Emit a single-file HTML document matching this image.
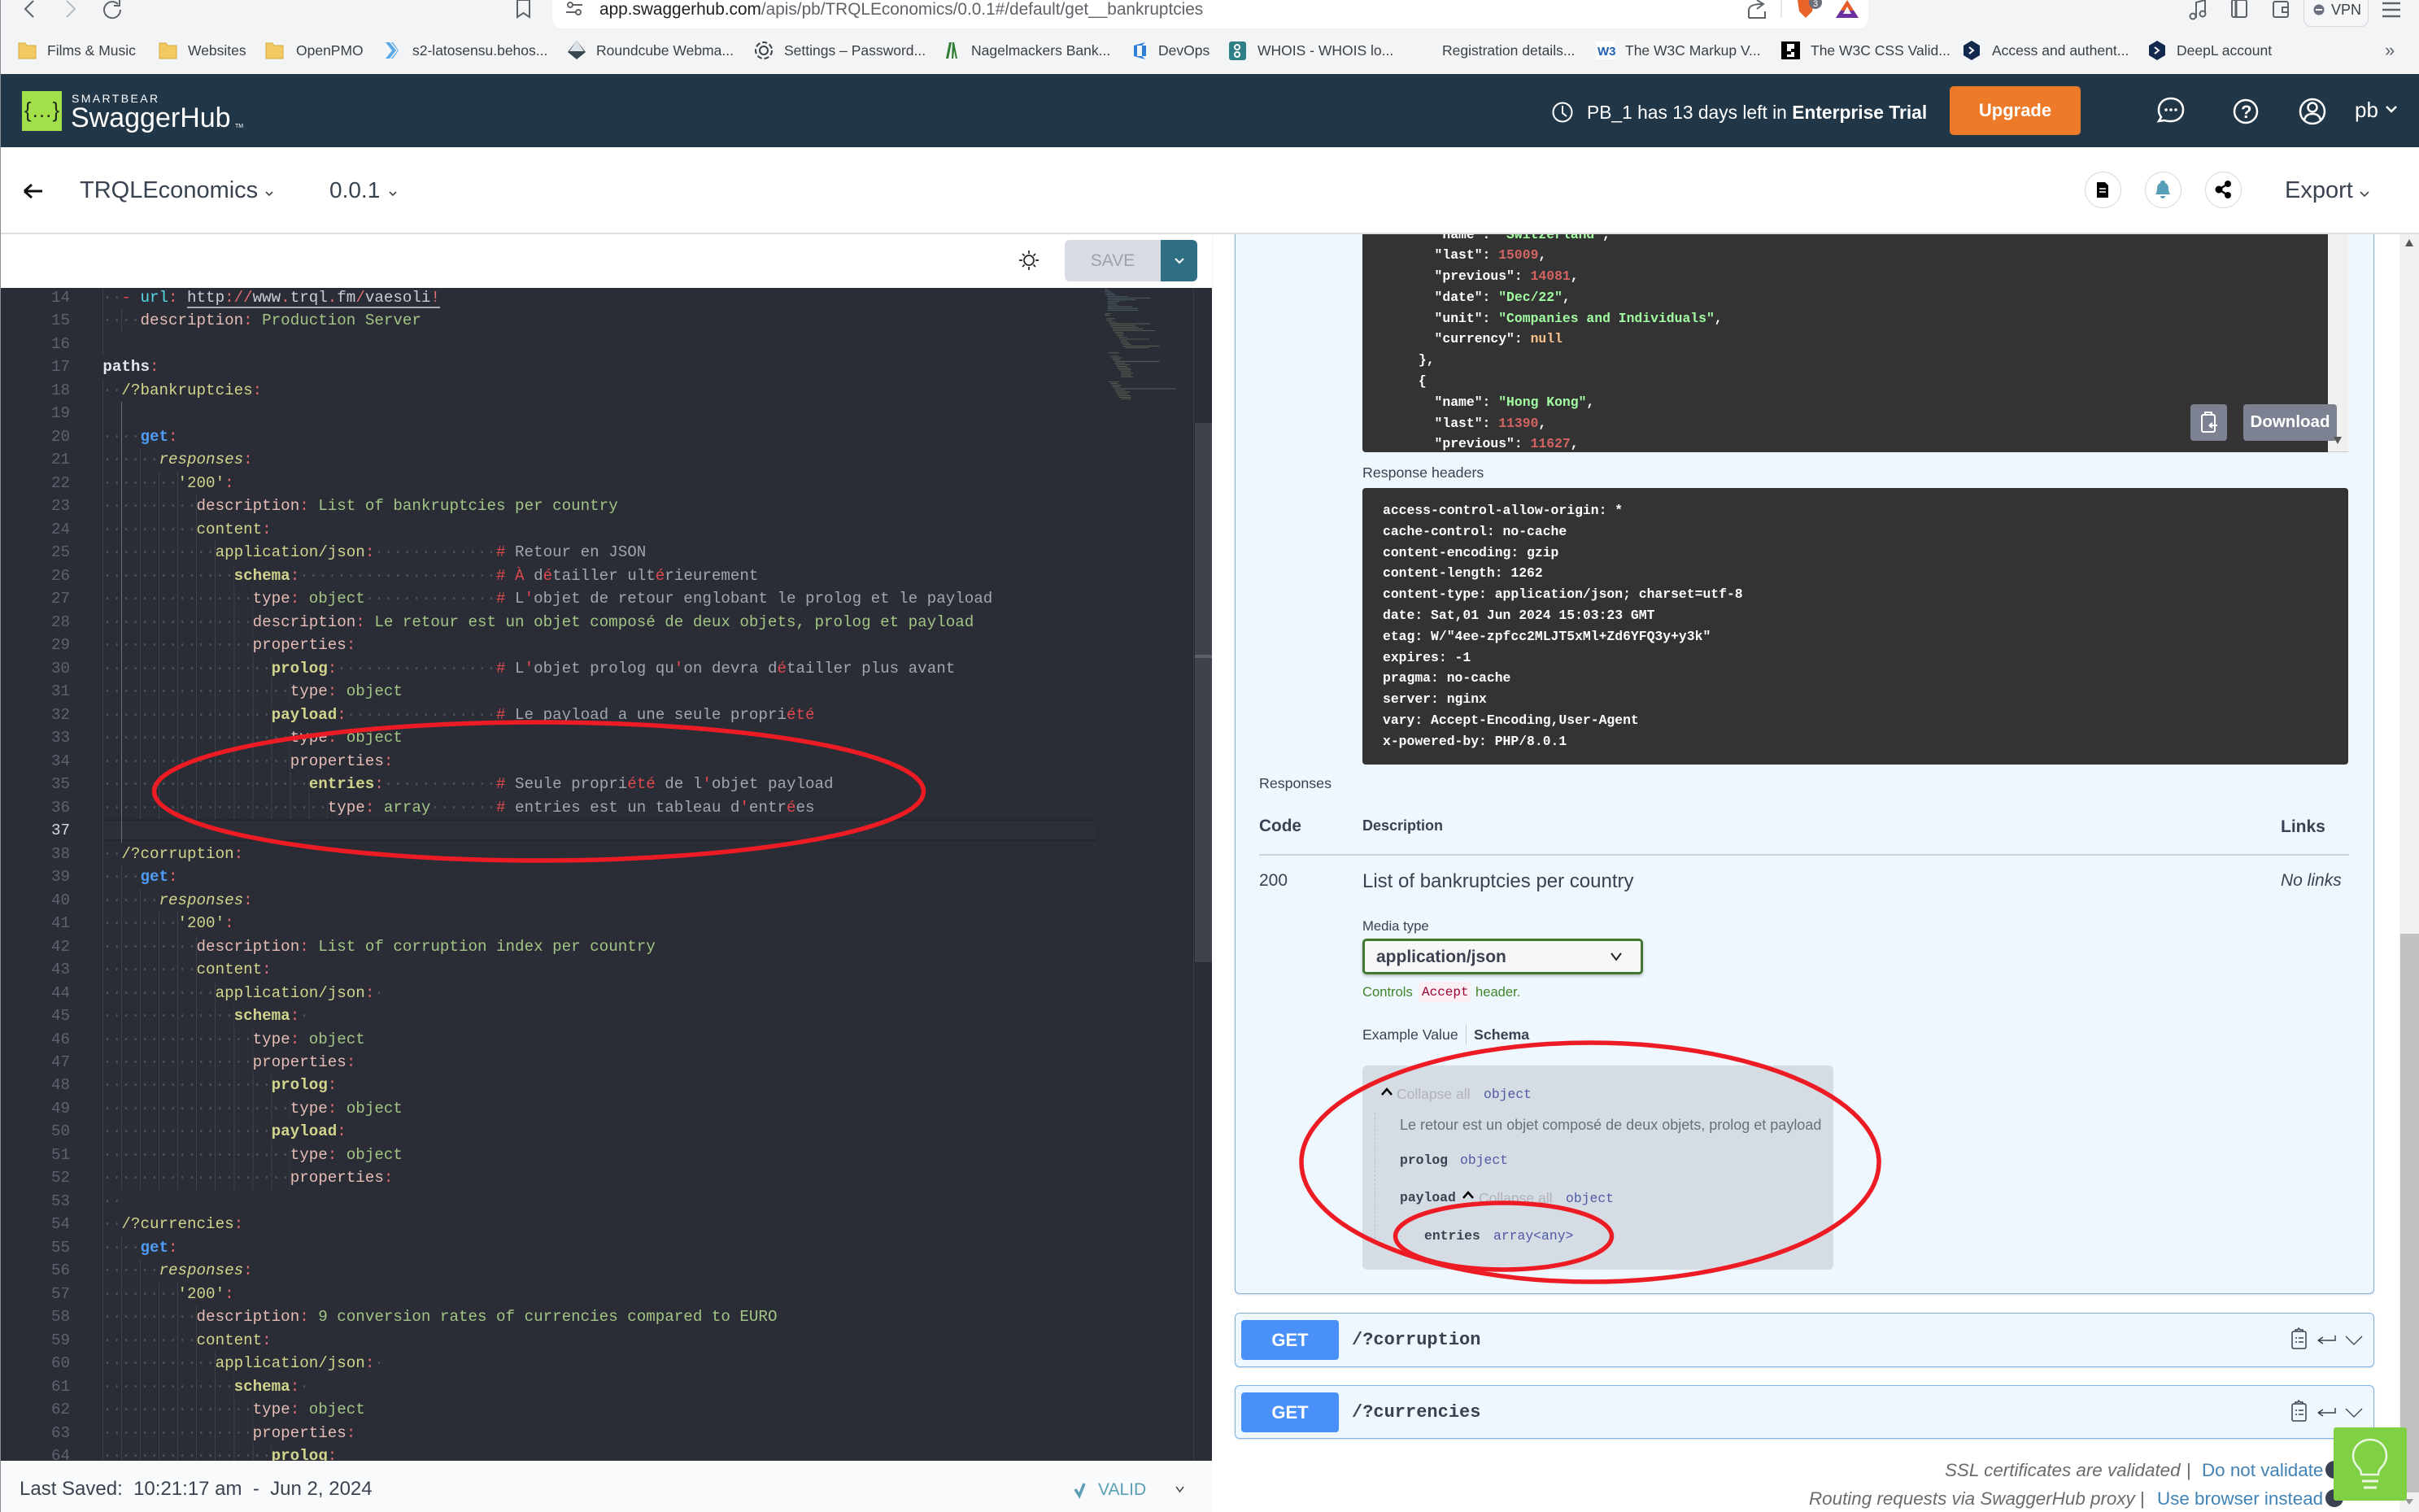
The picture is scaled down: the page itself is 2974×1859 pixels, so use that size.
<!DOCTYPE html>
<html lang="en"><head><meta charset="utf-8"><title>SwaggerHub</title>
<style>
html,body{margin:0;padding:0}
body{width:2974px;height:1859px;position:relative;overflow:hidden;background:#fff;font-family:"Liberation Sans",sans-serif;color:#3b4151}
.a{position:absolute}
.t{position:absolute;white-space:pre;line-height:1}
.m{font-family:"Liberation Mono",monospace}
.bm{position:absolute;top:52px;font-size:17.5px;line-height:20px;color:#3c4043;white-space:pre}
#ed{position:absolute;left:0;top:354px;width:1490px;height:1442px;background:#2a2d35;overflow:hidden}
#gut{position:absolute;left:0;top:-2px;width:86px;text-align:right;color:#5c6370;font:19.2px/28.49px "Liberation Mono",monospace;white-space:pre}
#code{position:absolute;left:126.4px;top:-2px;font:19.2px/28.49px "Liberation Mono",monospace;color:#c8ccd4}
#code div{height:28.49px;white-space:pre}
#code i{display:inline-block;height:28.49px;vertical-align:top;font-style:normal;color:#4c5059;background:repeating-linear-gradient(90deg,#3d4149 0 1px,transparent 1px 23.04px)}
#code u{text-decoration:none;color:#4c5059}
.c{color:#e06c75}.k{color:#e5bdb6}.y{color:#d2d48d}.s{color:#a3c585}.h{color:#a0a6b1}
.b{font-weight:bold}.e{font-style:italic}.r{color:#e0484f}
.dk{background:#333;position:absolute;color:#fff;font:bold 16.4px/25.8px "Liberation Mono",monospace;white-space:pre}
.g{color:#a2fca2}.n{color:#d36363}.o{color:#fcc28c}
.ob{background:#eef6fe;border:1.5px solid #7fb2e6;border-radius:6px;position:absolute;left:1518px;width:1399px;box-shadow:0 1px 2px rgba(0,0,0,.15)}
.get{position:absolute;left:1526px;width:120px;height:49px;background:#4990f8;border-radius:4px;color:#fff;font:bold 22px/49px "Liberation Sans",sans-serif;text-align:center}
.mt{font-family:"Liberation Mono",monospace;font-size:16.4px;line-height:1;position:absolute;white-space:pre;color:#4f5aa5}
.mb{font-family:"Liberation Mono",monospace;font-size:16.4px;font-weight:bold;line-height:1;position:absolute;white-space:pre;color:#3b4151}
.ca{position:absolute;white-space:pre;line-height:1;font-size:17.5px;color:#b0b3b8}
</style></head><body>

<!-- browser chrome -->
<div class="a" style="left:0;top:0;width:2974px;height:91px;background:#f3f4f6"></div>
<div class="a" style="left:679px;top:-10px;width:1618px;height:45px;background:#fff;border-radius:0 0 12px 12px"></div>
<div class="t" style="left:737px;top:2px;font-size:20.8px;color:#5f6368"><span style="color:#202124">app.swaggerhub.com</span>/apis/pb/TRQLEconomics/0.0.1#/default/get__bankruptcies</div>
<div class="a" style="left:2832px;top:-6px;width:78px;height:37px;border:1px solid #d5d7db;border-radius:0 0 9px 9px;background:#f5f6f7"></div>
<div class="t" style="left:2866px;top:3px;font-size:18px;color:#3c4043">VPN</div>

<div class="bm" style="left:58px">Films &amp; Music</div>
<div class="bm" style="left:231px">Websites</div>
<div class="bm" style="left:364px">OpenPMO</div>
<div class="bm" style="left:507px">s2-latosensu.behos...</div>
<div class="bm" style="left:733px">Roundcube Webma...</div>
<div class="bm" style="left:964px">Settings – Password...</div>
<div class="bm" style="left:1194px">Nagelmackers Bank...</div>
<div class="bm" style="left:1424px">DevOps</div>
<div class="bm" style="left:1546px">WHOIS - WHOIS lo...</div>
<div class="bm" style="left:1773px">Registration details...</div>
<div class="bm" style="left:1998px">The W3C Markup V...</div>
<div class="bm" style="left:2226px">The W3C CSS Valid...</div>
<div class="bm" style="left:2449px">Access and authent...</div>
<div class="bm" style="left:2676px">DeepL account</div>
<div class="bm" style="left:2932px;color:#5f6368;font-size:22px">»</div>

<!-- app header -->
<div class="a" style="left:0;top:91px;width:2974px;height:90px;background:#213748"></div>
<div class="a" style="left:27px;top:112px;width:49px;height:49px;background:#a2e04a;color:#1e2b1e;font:26px/46px 'Liberation Sans',sans-serif;text-align:center">{…}</div>
<div class="t" style="left:88px;top:114px;font-size:14px;color:#fff;letter-spacing:2.4px">SMARTBEAR</div>
<div class="t" style="left:87px;top:128px;font-size:34px;color:#fff">SwaggerHub</div>
<div class="t" style="left:289px;top:152px;font-size:7px;color:#fff">TM</div>
<div class="t" style="left:1951px;top:127px;font-size:22.8px;color:#fff">PB_1 has 13 days left in <b>Enterprise Trial</b></div>
<div class="a" style="left:2397px;top:106px;width:161px;height:60px;background:#ec7a28;border-radius:5px;color:#fff;font:bold 22px/59px 'Liberation Sans',sans-serif;text-align:center">Upgrade</div>
<div class="t" style="left:2895px;top:122px;font-size:26px;color:#fff">pb</div>

<!-- project bar -->
<div class="a" style="left:0;top:286px;width:2974px;height:2px;background:#dcdfe3;z-index:3"></div>
<div class="t" style="left:98px;top:220px;font-size:29px;color:#3a4351">TRQLEconomics</div>
<div class="t" style="left:405px;top:220px;font-size:28px;color:#3a4351">0.0.1</div>
<div class="t" style="left:2809px;top:220px;font-size:29px;color:#3a4351">Export</div>
<div class="a" style="left:2563px;top:211px;width:43px;height:43px;border:1px solid #d8dadd;border-radius:50%"></div>
<div class="a" style="left:2637px;top:211px;width:43px;height:43px;border:1px solid #d8dadd;border-radius:50%"></div>
<div class="a" style="left:2711px;top:211px;width:43px;height:43px;border:1px solid #d8dadd;border-radius:50%"></div>

<!-- editor toolbar -->
<div class="a" style="left:1309px;top:295px;width:118px;height:51px;background:#d7dbe2;border-radius:6px 0 0 6px;color:#9ca1ab;font:21px/51px 'Liberation Sans',sans-serif;text-align:center">SAVE</div>
<div class="a" style="left:1427px;top:295px;width:45px;height:51px;background:#2f6f86;border-radius:0 6px 6px 0"></div>
<div class="a" style="left:0;top:288px;width:1490px;height:66px;box-shadow:0 3px 3px rgba(0,0,0,.1)"></div>

<!-- editor -->
<div id="ed">
<div class="a" style="left:1467px;top:0;width:1px;height:1442px;background:#3a3d45"></div>
<div class="a" style="left:1469px;top:166px;width:21px;height:663px;background:#3f424a"></div>
<div class="a" style="left:1469px;top:451px;width:21px;height:4px;background:#5d6069"></div>
<div class="a" style="left:126px;top:653px;width:1222px;height:27px;background:#2c2f37;border-top:2px solid #24272d;border-bottom:2px solid #24272d;box-sizing:border-box"></div>
<div class="a" style="left:149px;top:140px;width:1px;height:542px;background:#6c7079;z-index:1"></div>
<div id="gut">14
15
16
17
18
19
20
21
22
23
24
25
26
27
28
29
30
31
32
33
34
35
36
<span style="color:#d5d8de">37</span>
38
39
40
41
42
43
44
45
46
47
48
49
50
51
52
53
54
55
56
57
58
59
60
61
62
63
64</div>
<div id="code">
<div><i>··</i><span class="r">-</span> <span style="color:#57d8e8">url</span><span class="c">:</span> <span style="border-bottom:2px solid #a9acb3">http<span class="c">://</span>www<span class="c">.</span>trql<span class="c">.</span>fm<span class="c">/</span>vaesoli<span class="c">!</span></span></div>
<div><i>····</i><span class="k">description</span><span class="c">:</span> <span class="s">Production Server</span></div>
<div><i>  </i></div>
<div><span class="b" style="color:#e4e7ec">paths</span><span class="c">:</span></div>
<div><i>··</i><span class="y">/?bankruptcies</span><span class="c">:</span></div>
<div><i>    </i></div>
<div><i>····</i><span class="b" style="color:#4e9cf5">get</span><span class="c">:</span></div>
<div><i>······</i><span class="y e">responses</span><span class="c">:</span></div>
<div><i>········</i><span class="y">'200'</span><span class="c">:</span></div>
<div><i>··········</i><span class="k">description</span><span class="c">:</span> <span class="s">List of bankruptcies per country</span></div>
<div><i>··········</i><span class="y">content</span><span class="c">:</span></div>
<div><i>············</i><span class="y">application/json</span><span class="c">:</span><u>·············</u><span class="r">#</span><span class="h"> Retour en JSON</span></div>
<div><i>··············</i><span class="y b">schema</span><span class="c">:</span><u>·····················</u><span class="r">#</span><span class="h"> <span class="r">À</span> d<span class="r">é</span>tailler ult<span class="r">é</span>rieurement</span></div>
<div><i>················</i><span class="k">type</span><span class="c">:</span> <span class="s">object</span><u>··············</u><span class="r">#</span><span class="h"> L<span class="r">'</span>objet de retour englobant le prolog et le payload</span></div>
<div><i>················</i><span class="k">description</span><span class="c">:</span> <span class="s">Le retour est un objet composé de deux objets, prolog et payload</span></div>
<div><i>················</i><span class="k">properties</span><span class="c">:</span></div>
<div><i>··················</i><span class="y b">prolog</span><span class="c">:</span><u>·················</u><span class="r">#</span><span class="h"> L<span class="r">'</span>objet prolog qu<span class="r">'</span>on devra d<span class="r">é</span>tailler plus avant</span></div>
<div><i>····················</i><span class="k">type</span><span class="c">:</span> <span class="s">object</span></div>
<div><i>··················</i><span class="y b">payload</span><span class="c">:</span><u>················</u><span class="r">#</span><span class="h"> Le payload a une seule propri<span class="r">été</span></span></div>
<div><i>····················</i><span class="k">type</span><span class="c">:</span> <span class="s">object</span></div>
<div><i>····················</i><span class="k">properties</span><span class="c">:</span></div>
<div><i>······················</i><span class="y b">entries</span><span class="c">:</span><u>············</u><span class="r">#</span><span class="h"> Seule propri<span class="r">été</span> de l<span class="r">'</span>objet payload</span></div>
<div><i>························</i><span class="k">type</span><span class="c">:</span> <span class="s">array</span><u>·······</u><span class="r">#</span><span class="h"> entries est un tableau d<span class="r">'</span>entr<span class="r">é</span>es</span></div>
<div><i>    </i></div>
<div><i>··</i><span class="y">/?corruption</span><span class="c">:</span></div>
<div><i>····</i><span class="b" style="color:#4e9cf5">get</span><span class="c">:</span></div>
<div><i>······</i><span class="y e">responses</span><span class="c">:</span></div>
<div><i>········</i><span class="y">'200'</span><span class="c">:</span></div>
<div><i>··········</i><span class="k">description</span><span class="c">:</span> <span class="s">List of corruption index per country</span></div>
<div><i>··········</i><span class="y">content</span><span class="c">:</span></div>
<div><i>············</i><span class="y">application/json</span><span class="c">:</span><u>·</u></div>
<div><i>··············</i><span class="y b">schema</span><span class="c">:</span><u>·</u></div>
<div><i>················</i><span class="k">type</span><span class="c">:</span> <span class="s">object</span></div>
<div><i>················</i><span class="k">properties</span><span class="c">:</span></div>
<div><i>··················</i><span class="y b">prolog</span><span class="c">:</span></div>
<div><i>····················</i><span class="k">type</span><span class="c">:</span> <span class="s">object</span></div>
<div><i>··················</i><span class="y b">payload</span><span class="c">:</span></div>
<div><i>····················</i><span class="k">type</span><span class="c">:</span> <span class="s">object</span></div>
<div><i>····················</i><span class="k">properties</span><span class="c">:</span></div>
<div><i>··</i></div>
<div><i>··</i><span class="y">/?currencies</span><span class="c">:</span></div>
<div><i>····</i><span class="b" style="color:#4e9cf5">get</span><span class="c">:</span></div>
<div><i>······</i><span class="y e">responses</span><span class="c">:</span></div>
<div><i>········</i><span class="y">'200'</span><span class="c">:</span></div>
<div><i>··········</i><span class="k">description</span><span class="c">:</span> <span class="s">9 conversion rates of currencies compared to EURO</span></div>
<div><i>··········</i><span class="y">content</span><span class="c">:</span></div>
<div><i>············</i><span class="y">application/json</span><span class="c">:</span><u>·</u></div>
<div><i>··············</i><span class="y b">schema</span><span class="c">:</span><u>·</u></div>
<div><i>················</i><span class="k">type</span><span class="c">:</span> <span class="s">object</span></div>
<div><i>················</i><span class="k">properties</span><span class="c">:</span></div>
<div><i>··················</i><span class="y b">prolog</span><span class="c">:</span></div>
</div>
<svg class="a" style="left:1348px;top:0" width="119" height="150" fill="none" stroke-width=".8">
<g transform="scale(1.25 1.05)">
<path stroke="#6f8f9a" opacity=".55" d="M8 2h4M8 4h6M9 6h8M9 8h10M11 10h20M11 12h42M11 14h28M11 16h12M11 18h8M11 20h10M11 22h24M11 24h30M11 26h30"/>
<path stroke="#8f9276" opacity=".55" d="M8 30h6M8 32h5M10 36h8M10 38h5M12 40h7M13 42h40M14 44h24M15 46h26M16 48h30M16 50h42M18 52h8M19 54h8M20 56h6M22 58h8M22 60h30M24 62h6M24 64h8M26 66h8M26 68h36M28 70h24M12 76h10M14 80h8M15 82h10M16 84h7M18 86h44M18 88h10M19 90h14M20 92h10M21 94h12M22 96h12M24 98h10M24 100h12M24 102h10M24 104h12M12 110h10M14 112h7M15 114h10M16 116h7M18 118h60M18 120h10M19 122h14M20 124h10M21 126h12M22 128h12M24 130h10"/>
</g>
</svg>
</div>

<!-- status bar -->
<div class="a" style="left:0;top:1796px;width:1490px;height:63px;background:#f9fafb"></div>
<div class="t" style="left:24px;top:1819px;font-size:24px;color:#3a4351">Last Saved:  10:21:17 am  -  Jun 2, 2024</div>
<div class="t" style="left:1350px;top:1821px;font-size:21px;color:#5a9fb5">VALID</div>
<div class="a" style="left:0;top:0;width:1px;height:1859px;background:#8a8d92;z-index:4"></div>

<!-- right pane -->
<div class="ob" style="top:288px;height:1302px;border-top:0;border-radius:0 0 6px 6px"></div>
<div class="dk" style="left:1675px;top:288px;width:1187px;height:268px;overflow:hidden;border-radius:0 0 0 4px">
<div class="a" style="left:0;top:-12.5px;white-space:pre">         "name": <span class="g">"Switzerland"</span>,
         "last": <span class="n">15009</span>,
         "previous": <span class="n">14081</span>,
         "date": <span class="g">"Dec/22"</span>,
         "unit": <span class="g">"Companies and Individuals"</span>,
         "currency": <span class="o">null</span>
       },
       {
         "name": <span class="g">"Hong Kong"</span>,
         "last": <span class="n">11390</span>,
         "previous": <span class="n">11627</span>,</div>
</div>
<div class="a" style="left:2862px;top:288px;width:25px;height:268px;background:#f0f0f0;border-bottom:1px solid #ccc;box-sizing:border-box"></div>
<div class="a" style="left:2693px;top:497px;width:45px;height:45px;background:#7d8293;border-radius:4px"></div>
<div class="a" style="left:2758px;top:497px;width:115px;height:45px;background:#7d8293;border-radius:4px;color:#fff;font:bold 20.5px/44px 'Liberation Sans',sans-serif;text-align:center">Download</div>
<div class="t" style="left:1675px;top:573px;font-size:17.8px;color:#3b4151">Response headers</div>
<div class="dk" style="left:1675px;top:600px;width:1212px;height:340px;border-radius:4px;box-sizing:border-box;padding:15px 25px">access-control-allow-origin: *
cache-control: no-cache
content-encoding: gzip
content-length: 1262
content-type: application/json; charset=utf-8
date: Sat,01 Jun 2024 15:03:23 GMT
etag: W/"4ee-zpfcc2MLJT5xMl+Zd6YFQ3y+y3k"
expires: -1
pragma: no-cache
server: nginx
vary: Accept-Encoding,User-Agent
x-powered-by: PHP/8.0.1</div>

<div class="t" style="left:1548px;top:955px;font-size:17.8px">Responses</div>
<div class="t" style="left:1548px;top:1006px;font-size:20.8px;font-weight:bold">Code</div>
<div class="t" style="left:1675px;top:1006px;font-size:18px;font-weight:bold">Description</div>
<div class="t" style="left:2804px;top:1006px;font-size:21px;font-weight:bold">Links</div>
<div class="a" style="left:1548px;top:1050px;width:1340px;height:2px;background:#cdd3da"></div>
<div class="t" style="left:1548px;top:1072px;font-size:21px">200</div>
<div class="t" style="left:1675px;top:1072px;font-size:24px">List of bankruptcies per country</div>
<div class="t" style="left:2804px;top:1072px;font-size:21px;font-style:italic">No links</div>
<div class="t" style="left:1675px;top:1131px;font-size:16.7px">Media type</div>
<div class="a" style="left:1675px;top:1154px;width:345px;height:44px;background:#f7f7f7;border:3px solid #41772f;border-radius:5px;box-sizing:border-box;box-shadow:0 2px 3px rgba(0,0,0,.25);color:#3b4151;font:bold 21px/40px 'Liberation Sans',sans-serif;padding-left:14px">application/json</div>
<div class="t" style="left:1675px;top:1212px;font-size:16.6px;color:#41842a">Controls</div>
<div class="a" style="left:1744px;top:1207px;width:64px;height:25px;background:#fceff1;border-radius:3px"></div>
<div class="t m" style="left:1748px;top:1212px;font-size:16px;color:#9a0039">Accept</div>
<div class="t" style="left:1814px;top:1212px;font-size:16.6px;color:#41842a">header.</div>
<div class="t" style="left:1675px;top:1264px;font-size:17.7px">Example Value</div>
<div class="a" style="left:1802px;top:1259px;width:1px;height:26px;background:#c4cad1"></div>
<div class="t" style="left:1812px;top:1264px;font-size:17.8px;font-weight:bold">Schema</div>

<div class="a" style="left:1675px;top:1310px;width:579px;height:251px;background:#d6dce4;border-radius:6px"></div>
<div class="a" style="left:1690px;top:1368px;width:0;height:160px;border-left:1px dashed #b9bfc7"></div>
<div class="ca" style="left:1717px;top:1337px">Collapse all</div>
<div class="mt" style="left:1824px;top:1338px">object</div>
<div class="t" style="left:1721px;top:1374px;font-size:18px;color:#6a6f78">Le retour est un objet composé de deux objets, prolog et payload</div>
<div class="mb" style="left:1721px;top:1419px">prolog</div>
<div class="mt" style="left:1795px;top:1419px">object</div>
<div class="mb" style="left:1721px;top:1465px">payload</div>
<div class="ca" style="left:1818px;top:1465px">Collapse all</div>
<div class="mt" style="left:1925px;top:1466px">object</div>
<div class="mb" style="left:1751px;top:1512px">entries</div>
<div class="mt" style="left:1836px;top:1512px">array&lt;any&gt;</div>

<div class="ob" style="top:1614px;height:65px"></div>
<div class="ob" style="top:1703px;height:64px"></div>
<div class="get" style="top:1623px">GET</div>
<div class="get" style="top:1712px">GET</div>
<div class="t m" style="left:1662px;top:1637px;font-size:22px;font-weight:bold">/?corruption</div>
<div class="t m" style="left:1662px;top:1726px;font-size:22px;font-weight:bold">/?currencies</div>

<div class="t" style="left:2391px;top:1797px;font-size:22.4px;font-style:italic;color:#6b6b6b">SSL certificates are validated</div>
<div class="t" style="left:2688px;top:1797px;font-size:22.4px;color:#6b6b6b">|</div>
<div class="t" style="left:2707px;top:1797px;font-size:22.4px;color:#4283b6">Do not validate</div>
<div class="t" style="left:2224px;top:1832px;font-size:22.4px;font-style:italic;color:#6b6b6b">Routing requests via SwaggerHub proxy</div>
<div class="t" style="left:2631px;top:1832px;font-size:22.4px;color:#6b6b6b">|</div>
<div class="t" style="left:2652px;top:1832px;font-size:22.4px;color:#4283b6">Use browser instead</div>

<!-- right scrollbar -->
<div class="a" style="left:2950px;top:288px;width:24px;height:1571px;background:#f1f1f1"></div>
<div class="a" style="left:2951px;top:1148px;width:23px;height:687px;background:#c1c1c1"></div>

<!-- icons & annotations -->
<svg class="a" style="left:0;top:0;z-index:5" width="2974" height="1859" fill="none">
<!-- browser nav -->
<g stroke="#5f6368" stroke-width="2">
<path d="M41 1 31 11l10 10"/><path stroke="#b6babf" d="M82 1l10 10-10 10"/>
<path d="M145 5a10 10 0 1 0 3 7M147 0v7h-7"/>
<path d="M636 0h15v21l-7.500-5-7.500 5z"/>
<circle cx="701" cy="6" r="3"/><circle cx="711" cy="15" r="3"/><path d="M704 6h12M696 15h12"/>
<path d="M2150 22h20v-8M2150 22v-9c0-5 4-8 16-8M2160 0l8 5-8 6"/>
<path stroke="#ccd0d4" stroke-width="1" d="M2190 0v22"/>
<path d="M2700 22V3l11-3v16"/><circle cx="2696" cy="20" r="3.500"/><circle cx="2708" cy="17" r="3.500"/>
<rect x="2744" y="0" width="18" height="21" rx="2"/><path d="M2749 0v21" stroke-width="3"/>
<rect x="2795" y="2" width="18" height="19" rx="2"/><path d="M2813 9h-7v6h7"/>
<path stroke-width="2.500" d="M2929 4h22M2929 12h22M2929 20h22"/>
</g>
<circle cx="2851" cy="12" r="6.500" fill="#6b7080"/><path d="M2847 12h8" stroke="#fff" stroke-width="2"/>
<path d="M2210 0h20l-2 14-8 8-8-8z" fill="#e8622a"/><circle cx="2232" cy="3" r="8" fill="#6a6e78"/>
<text x="2229" y="8" font-family="Liberation Sans" font-size="11" fill="#fff">3</text>
<path d="M2271 0l14 22h-28z" fill="#e55b2b"/><path d="M2257 22h28l-6-9h-16z" fill="#6a2fa0"/><path d="M2271 8l5 9h-10z" fill="#f3f4f6"/>

<!-- bookmark favicons -->
<g fill="#f2c862" stroke="#d9a93c" stroke-width="1">
<path d="M23 72V53h8l2 3h11v16zM196 72V53h8l2 3h11v16zM327 72V53h8l2 3h11v16z"/></g>
<path d="M474 52l8 10-8 10h5l8-10-8-10zM481 52l8 10-8 10h2l7-10-7-10z" fill="#5aa9e6"/>
<path d="M709 50l11 14-11 9-11-9z" fill="#37474f"/><path d="M709 50l9 13h-18z" fill="#dde3e8"/>
<g stroke="#3c4043" stroke-width="2"><circle cx="939" cy="62" r="5"/><circle cx="939" cy="62" r="10" stroke-dasharray="6 3"/></g>
<path d="M1163 72l4-20h3l-4 20zM1170 72l1-20h2l4 20h-2l-2-10-1 10z" fill="#2e7d32"/>
<path d="M1408 52l-14 4v13l14 4 -4-4h-6V56h6z" fill="#2f7fd8"/><path d="M1404 56h5v13h-5z" fill="#2f7fd8"/>
<rect x="1511" y="51" width="21" height="23" rx="3" fill="#2e7f87"/><circle cx="1521" cy="58" r="3" stroke="#fff" stroke-width="2"/><circle cx="1521" cy="67" r="3" stroke="#fff" stroke-width="2"/>
<rect x="1962" y="51" width="23" height="22" fill="#fff"/><text x="1964" y="68" font-family="Liberation Sans" font-size="15" font-weight="bold" fill="#1f5fb0">W3</text>
<rect x="2190" y="51" width="23" height="22" fill="#000"/><path d="M2197 54h9v6h-4v4h4v6h-9v-3h5v-4h-5z" fill="#fff"/>
<path d="M2424 50l10 6v12l-10 6-10-6V56z" fill="#12284c"/><path d="M2421 58l5 4-5 4" stroke="#fff" stroke-width="2"/>
<path d="M2652 50l10 6v12l-10 6-10-6V56z" fill="#12284c"/><path d="M2649 58l5 4-5 4" stroke="#fff" stroke-width="2"/>

<!-- header icons -->
<g stroke="#fff" stroke-width="2.500">
<circle cx="1921" cy="138" r="11.500" stroke-width="2"/><path stroke-width="2" d="M1921 130v9l5 4"/>
<path d="M2669 121c-9 0-15 6-15 14 0 4 1 6 3 9l-3 5 7-1c3 1 5 1 8 1 9 0 15-6 15-14s-6-14-15-14z"/>
<circle cx="2761" cy="137" r="14"/>
<circle cx="2843" cy="137" r="15"/><circle cx="2843" cy="132" r="5.500"/><path d="M2833 148c1-6 5-8 10-8s9 2 10 8"/>
<path d="M2934 131l6 6 6-6"/>
</g>
<g fill="#fff"><circle cx="2663" cy="135" r="1.800"/><circle cx="2669" cy="135" r="1.800"/><circle cx="2675" cy="135" r="1.800"/></g>
<text x="2755" y="145" font-family="Liberation Sans" font-size="22" font-weight="bold" fill="#fff">?</text>

<!-- project bar icons -->
<path d="M30 235h22M30 235l9-8M30 235l9 8" stroke="#111" stroke-width="3"/>
<path d="M327 236l4 4 4-4M479 236l4 4 4-4M2902 236l5 5 5-5" stroke="#444" stroke-width="1.600"/>
<path d="M2578 224h10l4 4v15h-14z" fill="#000"/><path d="M2581 232h8M2581 236h8" stroke="#fff" stroke-width="1.500"/>
<path d="M2659 222c-2 0-3 1-3 3-3 1-4 4-4 7 0 3-1 5-2 7h18c-1-2-2-4-2-7 0-3-1-6-4-7 0-2-1-3-3-3zM2656 241a3 3 0 0 0 6 0z" fill="#57a0b8"/>
<g fill="#000"><circle cx="2728" cy="233" r="4.500"/><circle cx="2739" cy="226" r="4"/><circle cx="2739" cy="240" r="4"/></g><path d="M2728 233l11-7M2728 233l11 7" stroke="#000" stroke-width="2.500"/>

<!-- editor toolbar -->
<g stroke="#222" stroke-width="1.700"><circle cx="1265" cy="320" r="6"/><path d="M1265 308v4M1265 328v4M1253 320h4M1273 320h4M1257 312l2.500 2.500M1270.500 325.500l2.500 2.500M1257 328l2.500-2.500M1270.500 314.500l2.500-2.500"/></g>
<path d="M1445 318l5 5 5-5" stroke="#fff" stroke-width="2"/>
<path d="M1322 1831l5 8 6-15" stroke="#5a9fb5" stroke-width="3.500"/>
<path d="M1446 1828l4.500 6 4.500-6" stroke="#444" stroke-width="1.500"/>

<!-- right pane icons -->
<path d="M2962 294l-5 9h10z" fill="#555"/>
<path d="M2869 537l5 9 5-9z" fill="#555"/>
<rect x="2707" y="510" width="16" height="21" rx="2" stroke="#fff" stroke-width="2"/><path d="M2711 510v-3h8v3" stroke="#fff" stroke-width="2"/><path d="M2726 523h-10M2716 523l4-3M2716 523l4 3" stroke="#fff" stroke-width="2"/>
<path d="M1981 1172l6 8 6-8" stroke="#222" stroke-width="2"/>
<path d="M1699 1346l6-7 6 7M1799 1473l6-7 6 7" stroke="#000" stroke-width="2.500"/>
<g stroke="#3b4151" stroke-width="1.500">
<rect x="2818" y="1637" width="17" height="21" rx="2"/><path d="M2822 1637v-2h3l1-2 2 2h3v2M2822 1645h2M2826 1645h6M2822 1650h2M2826 1650h6"/>
<path d="M2871 1642v6h-21M2850 1648l6-4M2850 1648l6 4"/><path stroke-width="1.300" d="M2884 1643l10 10 10-10"/>
<g transform="translate(0 89)"><rect x="2818" y="1637" width="17" height="21" rx="2"/><path d="M2822 1637v-2h3l1-2 2 2h3v2M2822 1645h2M2826 1645h6M2822 1650h2M2826 1650h6"/>
<path d="M2871 1642v6h-21M2850 1648l6-4M2850 1648l6 4"/><path stroke-width="1.300" d="M2884 1643l10 10 10-10"/></g>
</g>
<circle cx="2870" cy="1807" r="11" fill="#3b4151"/><circle cx="2870" cy="1842" r="11" fill="#3b4151"/>

<!-- green bulb -->
<rect x="2869" y="1755" width="90" height="90" rx="3" fill="#7fd045"/>
<path d="M2903 1813c0-7-4-8-7-13-2-3-3-6-3-10 0-11 9-20 21-20s20 9 20 20c0 4-1 7-3 10-3 5-7 6-7 13z" stroke="#e9f7df" stroke-width="2.500"/>
<path d="M2904 1821h20M2906 1829h16" stroke="#e9f7df" stroke-width="3"/>
<path d="M2957 1843h10l-5 7z" fill="#999"/>

<!-- annotation ellipses -->
<g stroke="#ed1c24" stroke-width="5.500">
<ellipse cx="662.500" cy="973" rx="473" ry="85"/>
<ellipse cx="1955" cy="1429" rx="355" ry="147"/>
<ellipse cx="1848.500" cy="1520" rx="133" ry="41"/>
</g>
</svg>
</body></html>
